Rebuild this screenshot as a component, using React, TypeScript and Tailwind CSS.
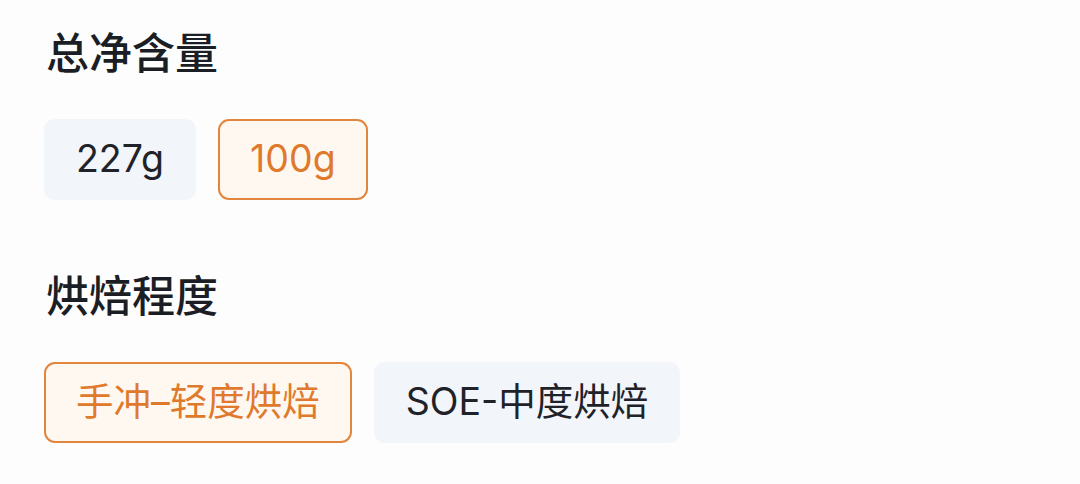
const SECTIONS = [
  {
    title: "总净含量",
    options: [
      { label: "227g", active: false },
      { label: "100g", active: true },
    ],
  },
  {
    title: "烘焙程度",
    options: [
      { label: "手冲–轻度烘焙", active: true },
      { label: "SOE-中度烘焙", active: false },
    ],
  },
];

export default function App() {
  return (
    <div
      className="h-[484px] w-[1080px] overflow-hidden bg-[#fdfdfd] pl-[44px] pt-[26px]"
      style={{ fontFamily: '"Inter", "Noto Sans CJK SC", sans-serif' }}
    >
      {SECTIONS.map((section, i) => (
        <section key={section.title} className={i > 0 ? "mt-[69px]" : ""}>
          {/* Section heading */}
          <h2 className="pl-[2px] text-[43px] font-medium leading-[54px] text-[#1b1e24]">
            {section.title}
          </h2>

          {/* Option chips */}
          <div className="mt-[39px] flex gap-[22px]">
            {section.options.map((opt) =>
              opt.active ? (
                <span
                  key={opt.label}
                  className="flex h-[81px] items-center rounded-[11px] border-2 border-[#e2853d] bg-[#fff8f1] px-[30px] text-[37.5px] text-[#df7a2c]"
                >
                  {opt.label}
                </span>
              ) : (
                <span
                  key={opt.label}
                  className="flex h-[81px] items-center rounded-[11px] bg-[#f2f5f9] px-[32px] text-[37.5px] text-[#1f2329]"
                >
                  {opt.label}
                </span>
              )
            )}
          </div>
        </section>
      ))}
    </div>
  );
}
